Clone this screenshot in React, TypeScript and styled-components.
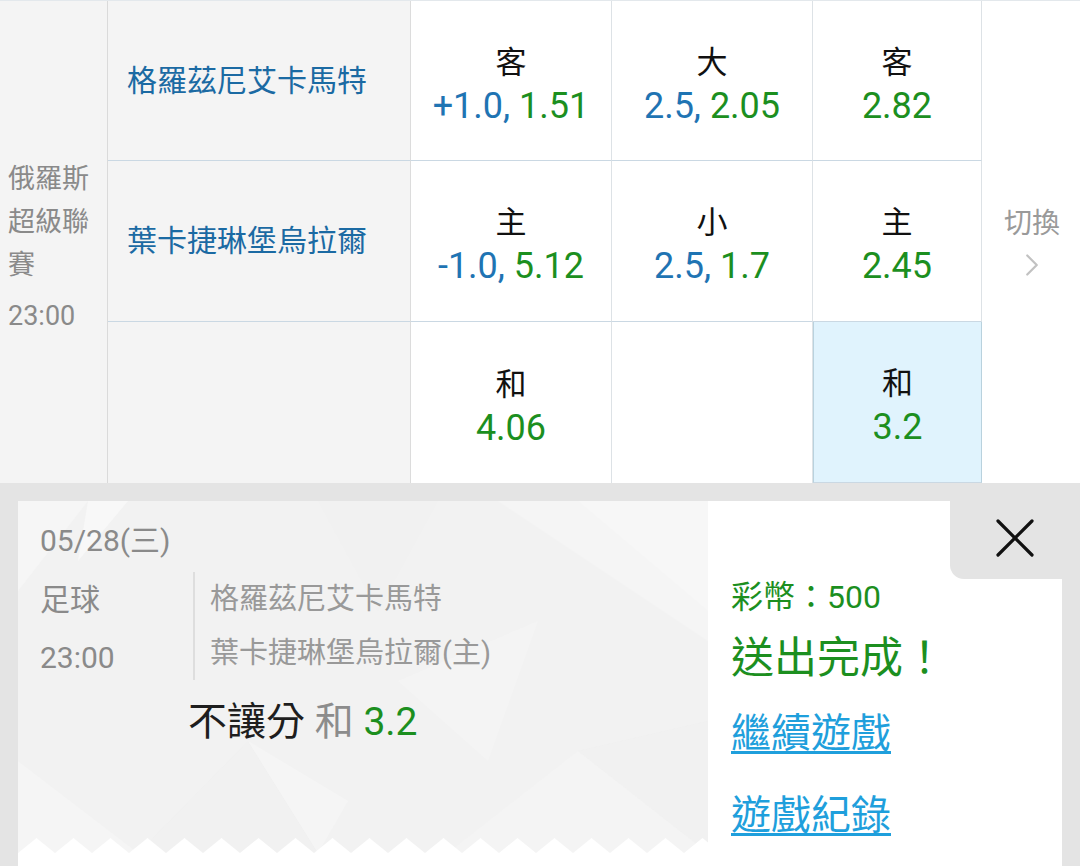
import React from 'react'
import styled, {createGlobalStyle} from 'styled-components'
import {ChevronRight} from 'lucide-react'

const FONT = `Roboto, "Noto Sans CJK TC", "Noto Sans", sans-serif`
const BLUE = '#1f74b3'
const GREEN = '#1c8f1f'

const GlobalStyle = createGlobalStyle`
  html, body {
    margin: 0;
    padding: 0;
    width: 1080px;
    height: 866px;
    overflow: hidden;
    background: #fff;
    font-family: ${FONT};
  }
  * { box-sizing: border-box; }
`

const Page = styled.div`
  width: 1080px;
  height: 866px;
  display: flex;
  flex-direction: column;
`

// ---------- odds board ----------
const Board = styled.div`
  display: grid;
  grid-template-columns: 108px 303px 201px 201px 169px 98px;
  grid-template-rows: 160px 161px 161px;
  border-top: 1px solid #e3e8ec;
`

const LeagueCell = styled.div`
  grid-column: 1;
  grid-row: 1 / span 3;
  background: #f4f4f4;
  border-right: 1px solid #dadada;
  display: flex;
  flex-direction: column;
  justify-content: center;
  padding: 11px 0 0 8px;
  color: #8a8a8a;
  font-size: 27px;
`

const LeagueName = styled.div`
  line-height: 43px;
  width: 86px;
  word-break: break-all;
`

const LeagueTime = styled.div`
  line-height: 43px;
  margin-top: 8px;
`

const TeamCell = styled.div<{ $last?: boolean }>`
  background: #f4f4f4;
  border-right: 1px solid #dcdcdc;
  border-bottom: ${p => (p.$last ? 'none' : '1px solid #cad8e3')};
  display: flex;
  align-items: center;
  padding-left: 19px;
  color: #1b6aa3;
  font-size: 30px;
  line-height: 40px;
`

const OddsCell = styled.div<{ $selected?: boolean; $last?: boolean }>`
  background: ${p => (p.$selected ? '#e0f3fd' : '#fff')};
  border-right: 1px solid ${p => (p.$selected ? '#b9d2de' : '#dde2e6')};
  border-bottom: ${p => (p.$last ? 'none' : '1px solid #cad8e3')};
  ${p => p.$selected && 'border-left: 1px solid #b9d2de;'}
  display: flex;
  flex-direction: column;
  align-items: center;
  justify-content: center;
  padding-top: 8px;
`

const OddsLabel = styled.div`
  font-size: 31px;
  line-height: 42px;
  color: #111;
`

const OddsValue = styled.div`
  font-size: 36px;
  line-height: 44px;
  white-space: nowrap;
`

const Tone = styled.span<{ $tone: 'blue' | 'green' | 'gray' | 'dark' }>`
  color: ${p => ({blue: BLUE, green: GREEN, gray: '#8c8c8c', dark: '#1e1e1e'}[p.$tone])};
`

const SwitchCell = styled.div`
  grid-column: 6;
  grid-row: 1 / span 3;
  background: #fff;
  display: flex;
  flex-direction: column;
  align-items: center;
  justify-content: center;
  color: #9a9a9a;
  font-size: 28px;
  line-height: 40px;
  padding: 4px 0 0 2px;
  svg { margin-top: 2px; }
`

// ---------- result overlay ----------
const Backdrop = styled.div`
  flex: 1;
  background: #e4e4e4;
  padding: 18px 18px 0;
  display: flex;
`

const Card = styled.div`
  flex: 1;
  position: relative;
  background: #fff;
  display: grid;
  grid-template-columns: 690px 1fr;
  align-items: start;
`

const Ticket = styled.div`
  position: relative;
  height: 352px;
  background: #f2f2f2;
  overflow: hidden;
  padding: 20px 22px 0;
  color: #8a8a8a;
`

const TicketArt = styled.svg`
  position: absolute;
  left: 0;
  top: 0;
  width: 690px;
  height: 352px;
`

const TicketBody = styled.div`
  position: relative;
`

const DateLine = styled.div`
  font-size: 30px;
  line-height: 40px;
`

const InfoRow = styled.div`
  display: flex;
  margin-top: 11px;
`

const InfoLeft = styled.div`
  width: 153px;
  font-size: 30px;
  line-height: 58px;
  margin-top: -1px;
`

const InfoTeams = styled.div`
  border-left: 2px solid #dedede;
  height: 108px;
  padding-left: 15px;
  font-size: 29px;
  line-height: 54px;
  color: #999;
  white-space: nowrap;
`

const BetLine = styled.div`
  margin: 11px 0 0 148px;
  font-size: 39px;
  line-height: 48px;
  white-space: nowrap;
`

const Side = styled.div`
  padding: 74px 0 0 23px;
  display: flex;
  flex-direction: column;
  color: ${GREEN};
`

const Coins = styled.div`
  font-size: 32px;
  line-height: 44px;
`

const Done = styled.div`
  font-size: 43px;
  line-height: 58px;
  margin-top: 10px;
`

const LinkText = styled.a<{ $gap: number }>`
  display: block;
  margin-top: ${p => p.$gap}px;
  font-size: 40px;
  line-height: 56px;
  color: #1f9fdc;
  text-decoration: underline;
  text-decoration-thickness: 3px;
  text-underline-offset: 4px;
`

const CloseButton = styled.button`
  position: absolute;
  right: 0;
  top: 0;
  width: 112px;
  height: 78px;
  border: none;
  padding: 0 0 4px 18px;
  background: #e4e4e4;
  border-bottom-left-radius: 14px;
  display: flex;
  align-items: center;
  justify-content: center;
`

const Zigzag = () => (
    <svg width="690" height="16" viewBox="0 0 690 16" style={{position: 'absolute', left: 0, bottom: 0}}>
        {Array.from({length: 20}).map((_, i) => (
            <polygon key={i} points={`${i * 37},16 ${i * 37 + 18.5},1 ${i * 37 + 37},16`} fill="#fff"/>
        ))}
    </svg>
)

type Odd = { label?: string; parts?: [string, string][]; selected?: boolean }

const rows: { team: string; odds: Odd[] }[] = [
    {
        team: '格羅茲尼艾卡馬特',
        odds: [
            {label: '客', parts: [['blue', '+1.0, '], ['green', '1.51']]},
            {label: '大', parts: [['blue', '2.5, '], ['green', '2.05']]},
            {label: '客', parts: [['green', '2.82']]},
        ],
    },
    {
        team: '葉卡捷琳堡烏拉爾',
        odds: [
            {label: '主', parts: [['blue', '-1.0, '], ['green', '5.12']]},
            {label: '小', parts: [['blue', '2.5, '], ['green', '1.7']]},
            {label: '主', parts: [['green', '2.45']]},
        ],
    },
    {
        team: '',
        odds: [
            {label: '和', parts: [['green', '4.06']]},
            {},
            {label: '和', parts: [['green', '3.2']], selected: true},
        ],
    },
]

export default function App() {
    return <>
        <GlobalStyle/>
        <Page>
            <Board>
                <LeagueCell>
                    <LeagueName>俄羅斯超級聯賽</LeagueName>
                    <LeagueTime>23:00</LeagueTime>
                </LeagueCell>
                {rows.map((row, r) => (
                    <React.Fragment key={r}>
                        <TeamCell $last={r === 2}>{row.team}</TeamCell>
                        {row.odds.map((o, c) => (
                            <OddsCell key={c} $selected={o.selected} $last={r === 2 && !o.selected}>
                                {o.label && <OddsLabel>{o.label}</OddsLabel>}
                                {o.parts && <OddsValue>
                                    {o.parts.map(([tone, text], i) =>
                                        <Tone key={i} $tone={tone as 'blue' | 'green'}>{text}</Tone>)}
                                </OddsValue>}
                            </OddsCell>
                        ))}
                    </React.Fragment>
                ))}
                <SwitchCell>
                    <div>切換</div>
                    <ChevronRight size={38} strokeWidth={1.4} color="#c2c2c2"/>
                </SwitchCell>
            </Board>

            <Backdrop>
                <Card>
                    <Ticket>
                        <TicketArt viewBox="0 0 690 352">
                            <polygon points="0,0 70,0 0,90" fill="#f6f6f6"/>
                            <polygon points="70,0 110,0 60,60" fill="#f8f8f8"/>
                            <polygon points="300,0 420,0 360,110" fill="#efefef" opacity="0.5"/>
                            <polygon points="480,0 690,0 690,140" fill="#f5f5f5"/>
                            <polygon points="560,0 690,110 690,0" fill="#f7f7f7"/>
                            <polygon points="0,260 120,352 0,352" fill="#f5f5f5"/>
                            <polygon points="120,352 230,240 300,352" fill="#efefef" opacity="0.5"/>
                            <polygon points="230,240 330,300 300,352" fill="#f5f5f5"/>
                            <polygon points="430,352 560,250 690,352" fill="#f4f4f4"/>
                            <polygon points="560,250 690,220 690,352" fill="#efefef" opacity="0.5"/>
                            <polygon points="380,180 520,120 470,260" fill="#f4f4f4"/>
                        </TicketArt>
                        <TicketBody>
                            <DateLine>05/28(三)</DateLine>
                            <InfoRow>
                                <InfoLeft>
                                    <div>足球</div>
                                    <div>23:00</div>
                                </InfoLeft>
                                <InfoTeams>
                                    <div>格羅茲尼艾卡馬特</div>
                                    <div>葉卡捷琳堡烏拉爾(主)</div>
                                </InfoTeams>
                            </InfoRow>
                            <BetLine>
                                <Tone $tone="dark">不讓分</Tone> <Tone $tone="gray">和</Tone> <Tone
                                $tone="green">3.2</Tone>
                            </BetLine>
                        </TicketBody>
                        <Zigzag/>
                    </Ticket>
                    <Side>
                        <Coins>彩幣：500</Coins>
                        <Done>送出完成！</Done>
                        <LinkText $gap={19}>繼續遊戲</LinkText>
                        <LinkText $gap={26}>遊戲紀錄</LinkText>
                    </Side>
                    <CloseButton aria-label="close">
                        <svg width="40" height="40" viewBox="0 0 40 40">
                            <line x1="3" y1="3" x2="37" y2="37" stroke="#111" strokeWidth="3.2" strokeLinecap="round"/>
                            <line x1="37" y1="3" x2="3" y2="37" stroke="#111" strokeWidth="3.2" strokeLinecap="round"/>
                        </svg>
                    </CloseButton>
                </Card>
            </Backdrop>
        </Page>
    </>
}
